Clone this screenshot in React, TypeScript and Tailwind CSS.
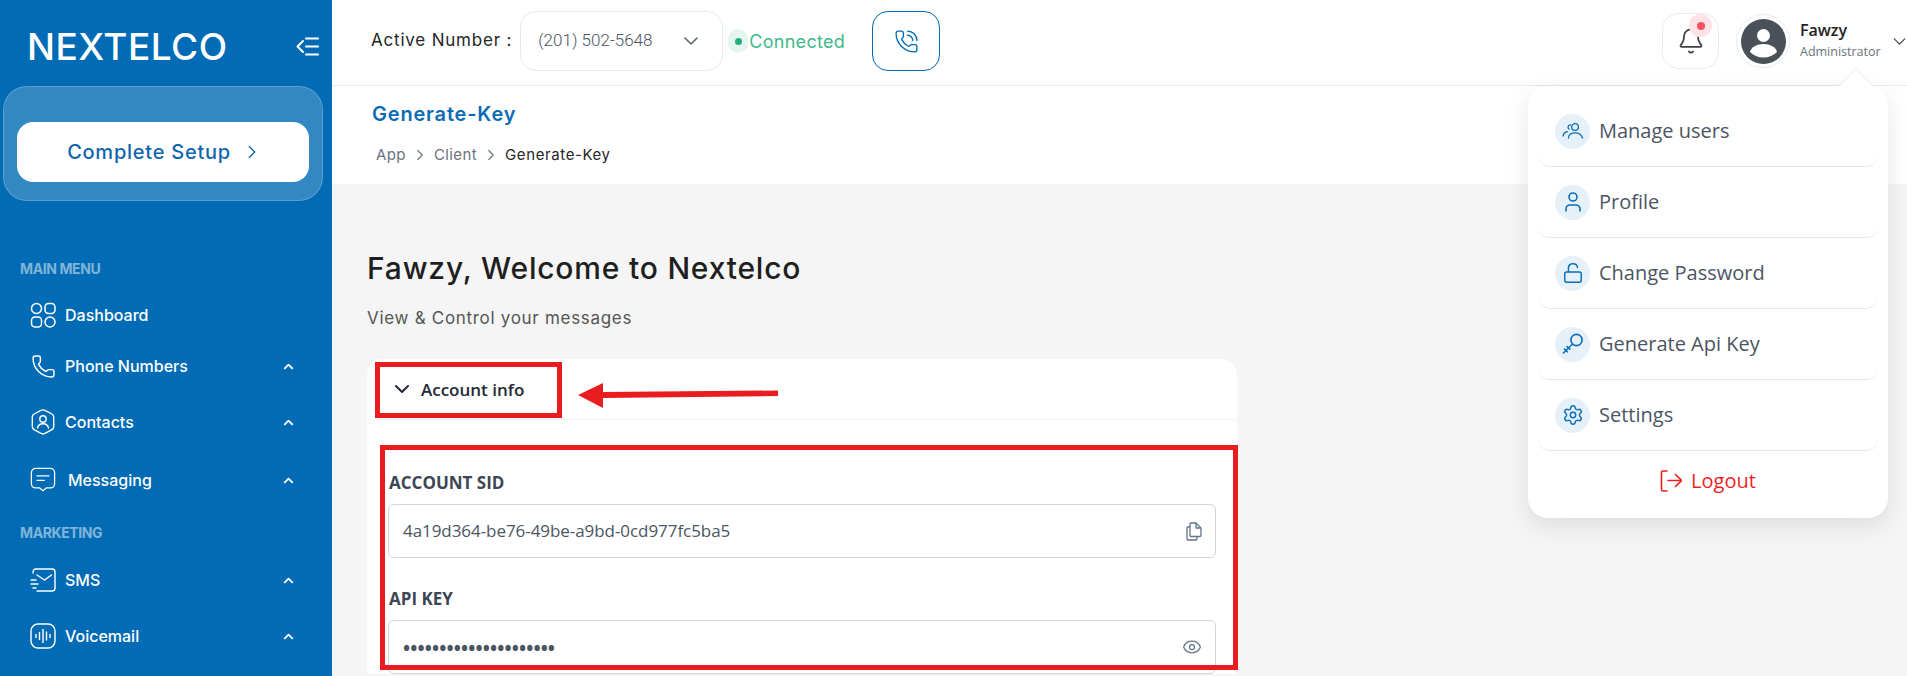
import { ChevronDown, ChevronRight, ChevronUp, Eye, LockOpen, Phone, PhoneCall, Settings, User, Bell } from "lucide-react";
import type { ReactNode } from "react";

function GridIcon() {
    return (
        <svg width="26" height="26" viewBox="0 0 26 26" fill="none" stroke="currentColor" strokeWidth="1.5">
            <circle cx="6.5" cy="6.5" r="5" />
            <rect x="15" y="1.5" width="10" height="10" rx="3.5" />
            <rect x="1.5" y="15" width="10" height="10" rx="3.5" />
            <circle cx="20" cy="20" r="5" />
        </svg>
    );
}

function ContactsIcon() {
    return (
        <svg width="26" height="26" viewBox="0 0 26 26" fill="none" stroke="currentColor" strokeWidth="1.4" strokeLinecap="round" strokeLinejoin="round">
            <path d="M10.5 1.6 a5 5 0 0 1 5 0 l6.4 3.4 a3.4 3.4 0 0 1 1.8 3 v9.6 a3.4 3.4 0 0 1 -1.8 3 l-6.4 3.6 a5 5 0 0 1 -5 0 l-6.4 -3.6 a3.4 3.4 0 0 1 -1.8 -3 v-9.6 a3.4 3.4 0 0 1 1.8 -3 z" />
            <circle cx="13" cy="10" r="3.2" />
            <path d="M7.5 19 c0.6 -3 2.8 -4.2 5.5 -4.2 s4.9 1.2 5.5 4.2" />
        </svg>
    );
}

function MessageIcon() {
    return (
        <svg width="28" height="28" viewBox="0 0 28 28" fill="none" stroke="currentColor" strokeWidth="1.4" strokeLinecap="round" strokeLinejoin="round">
            <path d="M6 1.5 h16 a4.5 4.5 0 0 1 4.5 4.5 v12 a4.5 4.5 0 0 1 -4.5 4.5 h-4.5 l-3.5 3 l-3.5 -3 h-4.5 a4.5 4.5 0 0 1 -4.5 -4.5 v-12 a4.5 4.5 0 0 1 4.5 -4.5 z" />
            <path d="M7.5 9.5 h13" />
            <path d="M7.5 14.5 h8" />
        </svg>
    );
}

function SmsIcon() {
    return (
        <svg width="26" height="24" viewBox="0 0 26 24" fill="none" stroke="currentColor" strokeWidth="1.4" strokeLinecap="round" strokeLinejoin="round">
            <path d="M3 5 v-1 a3 3 0 0 1 3 -3 h16 a3 3 0 0 1 3 3 v16 a3 3 0 0 1 -3 3 h-15" />
            <path d="M7 7 l7.5 5 l7 -5" />
            <path d="M1 12 h5" />
            <path d="M1 16 h7" />
            <path d="M3 20 h3" />
        </svg>
    );
}

function VoicemailIcon() {
    return (
        <svg width="26" height="26" viewBox="0 0 26 26" fill="none" stroke="currentColor" strokeWidth="1.4" strokeLinecap="round">
            <rect x="1" y="1" width="24" height="24" rx="7" />
            <path d="M6 11.5 v3" />
            <path d="M9.5 9.5 v7" />
            <path d="M13 6.5 v13" />
            <path d="M16.5 9 v8" />
            <path d="M20 11.5 v3" />
        </svg>
    );
}

function CollapseIcon() {
    return (
        <svg width="23" height="19" viewBox="0 0 23 19" fill="none" stroke="white" strokeWidth="2" strokeLinecap="round" strokeLinejoin="round">
            <path d="M7 4 l-5.5 5.5 l5.5 5.5" />
            <path d="M10 1.5 h12" />
            <path d="M10 9.5 h12" />
            <path d="M10 17.5 h12" />
        </svg>
    );
}

function UsersIcon() {
    return (
        <svg width="22" height="18" viewBox="0 0 22 18" fill="none" stroke="#0a6fb8" strokeWidth="1.3" strokeLinecap="round" strokeLinejoin="round">
            <circle cx="13" cy="5" r="3.4" />
            <path d="M6.5 16 c0 -3.6 2.8 -5.2 6.5 -5.2 s6.5 1.6 7.5 5.2" />
            <path d="M8.5 2.8 a2.4 2.4 0 0 0 -1.4 4.4" />
            <path d="M1.2 14 c0.2 -2.6 1.8 -4 4.3 -4.3" />
        </svg>
    );
}

function KeyIcon() {
    return (
        <svg width="22" height="22" viewBox="0 0 22 22" fill="none" stroke="#0a6fb8" strokeWidth="1.6" strokeLinecap="round" strokeLinejoin="round">
            <circle cx="14.5" cy="7" r="5.6" />
            <path d="M10.5 11 L1.5 20" />
            <path d="M2.5 16 l2.8 2.800" />
            <path d="M5 13.500 l2.800 2.800" />
        </svg>
    );
}

function LogoutIcon() {
    return (
        <svg width="22" height="22" viewBox="0 0 22 22" fill="none" stroke="#ee1f1f" strokeWidth="1.6" strokeLinecap="round" strokeLinejoin="round">
            <path d="M7 1 H3 a1.5 1.5 0 0 0 -1.5 1.5 v17 a1.5 1.5 0 0 0 1.5 1.5 h4" />
            <path d="M8 10.5 h13" />
            <path d="M15.5 4.5 l6 6 l-6 6" />
        </svg>
    );
}

function CopyIcon() {
    return (
        <svg width="16" height="19" viewBox="0 0 16 19" fill="none" stroke="#64748b" strokeWidth="1.3" strokeLinejoin="round">
            <path d="M5 1 h5 l5 5 v7.5 a1 1 0 0 1 -1 1 h-9 a1 1 0 0 1 -1 -1 v-11.500 a1 1 0 0 1 1 -1 z" />
            <path d="M10 1 v5 h5" />
            <path d="M4 5 h-2 a1 1 0 0 0 -1 1 v11 a1 1 0 0 0 1 1 h8 a1 1 0 0 0 1 -1 v-2.500" />
        </svg>
    );
}

interface NavRowProps {
    icon: ReactNode;
    label: string;
    className: string;
    labelClass?: string;
    arrow?: boolean;
}

function NavRow({ icon, label, className, labelClass = "ml-[9px]", arrow = true }: NavRowProps) {
    return (
        <div className={`flex h-10 items-center pl-[30px] pr-[36px] text-white ${className}`}>
            <div className="flex w-[26px] shrink-0 justify-center">{icon}</div>
            <span className={`text-[16px] font-medium ${labelClass}`}>{label}</span>
            {arrow && <ChevronUp className="ml-auto" size={15} strokeWidth={3} />}
        </div>
    );
}

function Sidebar() {
    return (
        <aside className="flex h-full w-[332px] shrink-0 flex-col bg-[#016bb5] font-['Inter',sans-serif]">
            <div className="flex h-[85px] items-center justify-between pl-[27px] pr-[13px] pt-[7px]">
                <span className="text-[37px] font-medium leading-none tracking-[0.5px] text-white">NEXTELCO</span>
                <CollapseIcon />
            </div>
            <div className="ml-[3px] mt-px flex h-[115px] w-[320px] justify-center rounded-[24px] border border-white/20 bg-white/20 pt-[35px]">
                <div className="flex h-[60px] w-[292px] items-center justify-center rounded-[16px] bg-white pl-[4px] text-[20px] font-medium tracking-[0.75px] text-[#0f66ae]">
                    Complete Setup
                    <ChevronRight className="ml-[10px]" size={22} strokeWidth={1.4} />
                </div>
            </div>
            <div className="ml-[20px] mt-[58px] h-5 text-[14px] font-bold leading-5 tracking-[-0.4px] text-white/50">MAIN MENU</div>
            <NavRow icon={<GridIcon />} label="Dashboard" className="mt-4" arrow={false} />
            <NavRow icon={<Phone size={25} strokeWidth={1.4} />} label="Phone Numbers" className="mt-[11px]" />
            <NavRow icon={<ContactsIcon />} label="Contacts" className="mt-4" />
            <NavRow icon={<MessageIcon />} label="Messaging" className="mt-[18px]" labelClass="ml-[12px]" />
            <div className="ml-[20px] mt-[23px] h-5 text-[14px] font-bold leading-5 tracking-[-0.4px] text-white/50">MARKETING</div>
            <NavRow icon={<SmsIcon />} label="SMS" className="mt-[17px]" />
            <NavRow icon={<VoicemailIcon />} label="Voicemail" className="mt-4" />
        </aside>
    );
}

function TopBar() {
    return (
        <header className="flex h-[86px] shrink-0 items-center border-b border-[#e8e8e8] bg-white pb-[3px] pl-[39px] font-['Inter',sans-serif]">
            <span className="text-[17px] font-normal tracking-[0.8px] text-[#262626]">Active Number :</span>
            <div className="ml-2 flex h-[60px] w-[203px] items-center justify-between rounded-[16px] border border-[#e8e8e8] pl-[17px] pr-[19px] font-['Roboto',sans-serif] text-[17px] font-light text-[#4b5563]">
                (201) 502-5648
                <ChevronDown size={24} strokeWidth={1.6} className="text-[#5b6470]" />
            </div>
            <div className="ml-[5px] flex h-6 w-[20px] items-center justify-center rounded-full bg-[#e4f4ef]">
                <div className="h-[7px] w-[7px] rounded-full bg-[#27ae7f]" />
            </div>
            <span className="ml-px text-[18px] tracking-[0.3px] text-[#3fb88c]">Connected</span>
            <div className="ml-[27px] flex h-[60px] w-[68px] items-center justify-center rounded-[16px] border border-[#016bb5] text-[#016bb5]">
                <PhoneCall size={25} strokeWidth={1.3} />
            </div>
            <div className="relative ml-auto flex h-[56px] w-[57px] items-center justify-center rounded-[16px] border border-[#ececec] text-[#3f3f46]">
                <Bell size={28} strokeWidth={1.5} />
                <div className="absolute left-[26px] top-[0px] flex h-[23px] w-[23px] items-center justify-center rounded-full bg-[#fde3e5]">
                    <div className="h-2 w-2 rounded-full bg-[#f9515f]" />
                </div>
            </div>
            <div className="ml-[17px] flex h-[54px] w-[54px] items-center justify-center rounded-full border border-[#e4eef7]">
                <svg width="45" height="45" viewBox="0 0 45 45">
                    <circle cx="22.500" cy="22.500" r="22.500" fill="#495057" />
                    <circle cx="22.500" cy="16.500" r="6.500" fill="white" />
                    <path d="M9 33 c1 -5 7 -8 13.500 -8 s12.500 3 13.500 8 c-3.500 3.500 -8 5.500 -13.500 5.500 s-10 -2 -13.500 -5.500 z" fill="white" />
                </svg>
            </div>
            <div className="ml-[10px] flex w-[89px] flex-col font-['Open_Sans',sans-serif]">
                <span className="text-[16px] font-semibold leading-[22px] text-[#222]">Fawzy</span>
                <span className="text-[12.500px] leading-[22px] text-[#6b7280]">Administrator</span>
            </div>
            <ChevronDown size={21} strokeWidth={1.4} className="mr-[-3px] text-[#3f3f46]" />
        </header>
    );
}

function PageTitle() {
    return (
        <div className="h-[98px] shrink-0 bg-white pl-[40px] pt-[16px] font-['Inter',sans-serif]">
            <div className="text-[20px] font-semibold leading-6 tracking-[0.8px] text-[#0b6bb5]">Generate-Key</div>
            <div className="ml-[4px] mt-[19px] flex items-center text-[15px] leading-5 tracking-[0.4px] text-[#6b7280]">
                App
                <ChevronRight className="mx-[5px]" size={18} strokeWidth={1.5} />
                Client
                <ChevronRight className="mx-[5px]" size={18} strokeWidth={1.5} />
                <span className="tracking-[0.6px] text-[#262626]">Generate-Key</span>
            </div>
        </div>
    );
}

function Field({ label, className, children }: { label: string; className: string; children: ReactNode }) {
    return (
        <div className={className}>
            <div className="pl-px text-[17px] font-bold leading-6 text-[#3d4654]">{label}</div>
            <div className="mt-[9px] flex h-[54px] items-center justify-between rounded-[6px] border border-[#d1d5db] pl-[14px] pr-[13px] text-[17px] tracking-[-0.06px] text-[#4b5563]">
                {children}
            </div>
        </div>
    );
}

function AccountCard() {
    return (
        <div className="relative mt-[29px] w-[870px] rounded-t-[16px] bg-white font-['Open_Sans',sans-serif]">
            <div className="flex h-[61px] items-center border-b border-[#f1f5f9] pl-[23px]">
                <ChevronDown size={24} strokeWidth={2} className="text-[#1f2937]" />
                <span className="ml-[7px] pt-px text-[17px] font-semibold text-[#1f2937]">Account info</span>
            </div>
            <div className="px-[21px] pt-[51px]">
                <Field label="ACCOUNT SID" className="">
                    <span>4a19d364-be76-49be-a9bd-0cd977fc5ba5</span>
                    <CopyIcon />
                </Field>
                <Field label="API KEY" className="mt-[29px]">
                    <span className="pt-[2px] text-[19px] font-bold leading-none tracking-[0.1px]">•••••••••••••••••••••</span>
                    <Eye size={20} strokeWidth={1.5} className="text-[#64748b]" />
                </Field>
            </div>
            {/* annotations on top of the screenshot */}
            <div className="absolute left-[8px] top-[3px] h-[56px] w-[187px] border-[5px] border-[#e91c1f]" />
            <div className="absolute left-[13px] top-[86px] h-[225px] w-[858px] border-[5px] border-[#e91c1f]" />
            <svg className="absolute left-[211px] top-[24px]" width="202" height="25" viewBox="0 0 202 25">
                <polygon points="0,12 25,0 25,9 200,7.500 200,13 25,15 25,25" fill="#e91c1f" />
            </svg>
        </div>
    );
}

const menuItems = [
    { label: "Manage users", icon: <UsersIcon /> },
    { label: "Profile", icon: <User size={24} strokeWidth={1.6} /> },
    { label: "Change Password", icon: <LockOpen size={22} strokeWidth={1.6} /> },
    { label: "Generate Api Key", icon: <KeyIcon /> },
    { label: "Settings", icon: <Settings size={22} strokeWidth={1.6} /> },
];

function UserMenu() {
    return (
        <div className="absolute left-[1528px] top-[86px] w-[360px] rounded-[20px] bg-white px-[10px] pb-2 font-['Open_Sans',sans-serif] shadow-[0_8px_24px_rgba(0,0,0,0.1)]">
            {menuItems.map((item) => (
                <div key={item.label} className="flex h-[71px] items-center rounded-[12px] border-b border-[#e5e7eb] pl-[17px] first:h-[81px] first:pt-[10px]">
                    <div className="flex h-[35px] w-[35px] items-center justify-center rounded-full bg-[#e6f0f8] text-[#0a6fb8]">{item.icon}</div>
                    <span className="ml-[9px] text-[20px] text-[#4b5563]">{item.label}</span>
                </div>
            ))}
            <div className="flex h-[59px] items-center justify-center text-[20px] text-[#ee1f1f]">
                <LogoutIcon />
                <span className="ml-[9px]">Logout</span>
            </div>
            <div className="absolute left-[316px] top-[-13px] h-6 w-6 rotate-45 border-l border-t border-[#ececec] bg-white" />
        </div>
    );
}

export default function App() {
    return (
        <div className="relative flex h-[676px] w-full overflow-hidden bg-[#f5f5f5]">
            <Sidebar />
            <div className="flex min-w-0 flex-1 flex-col">
                <TopBar />
                <PageTitle />
                <main className="pl-[35px] pt-[64px] font-['Inter',sans-serif]">
                    <h1 className="text-[30px] font-medium leading-10 tracking-[0.8px] text-[#1f1f1f]">Fawzy, Welcome to Nextelco</h1>
                    <p className="mt-[18px] text-[17px] leading-6 tracking-[0.7px] text-[#555]">View &amp; Control your messages</p>
                    <AccountCard />
                </main>
            </div>
            <UserMenu />
        </div>
    );
}
